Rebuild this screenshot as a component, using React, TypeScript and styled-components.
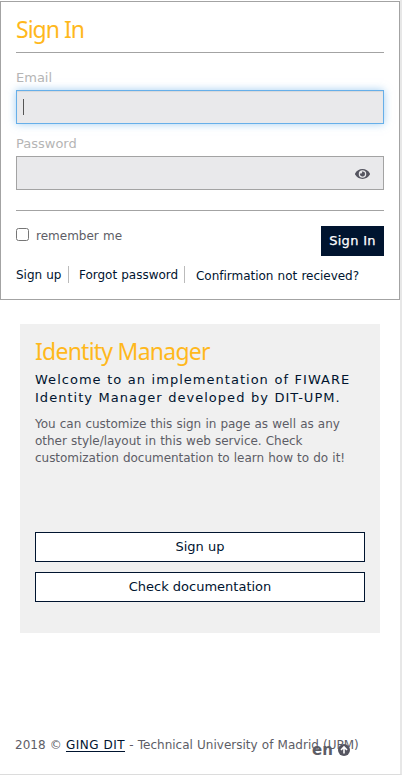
import React from 'react';
import styled, { createGlobalStyle } from 'styled-components';

const GlobalStyle = createGlobalStyle`
  *, *::before, *::after { box-sizing: border-box; }
  body {
    margin: 0;
    background: #fff;
    color: #5d5d66;
    font: 12px/18px Verdana, "DejaVu Sans", sans-serif;
    word-spacing: 0.4px;
    overflow: hidden;
  }
`;

const Page = styled.div`
  display: flex;
  flex-direction: column;
  width: 402px;
  height: 775px;
  padding: 1px 0 0;
  border-right: 2px solid #e7e7e7;
  border-bottom: 1px solid #dcdcdc;
`;

const Card = styled.form`
  display: flex;
  flex-direction: column;
  height: 299px;
  padding: 0 15px;
  border: 1px solid #a3a3a3;
`;

const Title = styled.h1<{ $spacing: number }>`
  margin: 0;
  color: #ffb81c;
  font: 400 23px/30px "Noto Sans", "Open Sans", sans-serif;
  letter-spacing: ${(p) => p.$spacing}px;
  word-spacing: 0;
  white-space: nowrap;
`;

const CardHeader = styled.header`
  height: 51px;
  padding-top: 12px;
  border-bottom: 1px solid #a3a3a3;
`;

const Label = styled.label`
  height: 21px;
  color: #b5b5b5;
  font-size: 13px;
  line-height: 18px;
`;

const EmailLabel = styled(Label)`
  margin-top: 16px;
`;

const PasswordLabel = styled(Label)`
  margin-top: 11px;
`;

const Field = styled.div<{ $focused?: boolean }>`
  display: flex;
  align-items: center;
  height: 34px;
  padding: 0 13px 0 6px;
  background: #e9e9eb;
  border: 1px solid ${(p) => (p.$focused ? '#66afe9' : '#a3a3a3')};
  box-shadow: ${(p) =>
    p.$focused
      ? 'inset 0 1px 1px rgba(0,0,0,.075), 0 0 8px rgba(102,175,233,.6)'
      : 'none'};

  svg { margin-top: 2px; }
`;

const Caret = styled.span`
  width: 1px;
  height: 16px;
  background: #555;
`;

const Input = styled.input`
  flex: 1;
  min-width: 0;
  padding: 0;
  background: transparent;
  border: 0;
  outline: 0;
`;

const Actions = styled.div`
  display: flex;
  justify-content: space-between;
  height: 46px;
  margin-top: 20px;
  padding-top: 15px;
  border-top: 1px solid #a3a3a3;
`;

const Remember = styled.label`
  display: flex;
  gap: 7px;
  height: 18px;
  padding-top: 1px;
`;

const Checkbox = styled.input`
  width: 13px;
  height: 13px;
  margin: 1px 0 0;
`;

const SignInButton = styled.button`
  width: 63px;
  height: 30px;
  padding: 0;
  color: #fff;
  background: #00142f;
  border: 0;
  font: 13px/18px Verdana, "DejaVu Sans", sans-serif;
  letter-spacing: 0.3px;
  -webkit-text-stroke: 0.25px #fff;
`;

const Links = styled.nav`
  display: flex;
  height: 17px;
  margin-top: 10px;
  white-space: nowrap;
`;

const TextLink = styled.a<{ $width?: number; $gap?: number; $drop?: number }>`
  flex: none;
  width: ${(p) => (p.$width ? `${p.$width}px` : 'auto')};
  margin-right: ${(p) => p.$gap || 0}px;
  padding-top: ${(p) => p.$drop || 0}px;
  border-right: ${(p) => (p.$width ? '1px solid #bbb' : '0')};
  color: #00142f;
  letter-spacing: -0.02px;
`;

const InfoPanel = styled.section`
  display: flex;
  flex-direction: column;
  height: 309px;
  margin: 24px 20px 0;
  padding: 12px 15px 0;
  background: #f0f0f0;
`;

const Welcome = styled.p`
  margin: 5px 0 0;
  color: #00142f;
  font-size: 13px;
  line-height: 18px;
  letter-spacing: 1.02px;
  white-space: nowrap;
`;

const Description = styled.p`
  margin: 9px 0 0;
  line-height: 17px;
  letter-spacing: -0.03px;
  white-space: nowrap;
`;

const PanelButtons = styled.div`
  display: grid;
  gap: 10px;
  margin: auto 0 31px;
`;

const OutlineButton = styled.button`
  height: 30px;
  padding: 0;
  color: #00142f;
  background: #fff;
  border: 1px solid #00142f;
  font: 13px/18px Verdana, "DejaVu Sans", sans-serif;
`;

const Footer = styled.footer`
  position: relative;
  height: 38px;
  margin-top: auto;
  padding-left: 15px;
  white-space: nowrap;

  a {
    color: #00142f;
    letter-spacing: 0.45px;
    text-decoration: underline;
    text-underline-offset: 2px;
  }
`;

const Language = styled.div`
  position: absolute;
  top: 5px;
  left: 312px;
  display: flex;
  align-items: center;
  gap: 5px;
  font: 700 15px/18px Verdana, "DejaVu Sans", sans-serif;
`;

const EyeIcon = () => (
  <svg width="15" height="10" viewBox="0 0 576 384" fill="#555560">
    <path
      fillRule="evenodd"
      d="M572 170C518 65 411 0 288 0S58 65 4 170a48 48 0 0 0 0 44c54 105 161 170 284 170s230-65 284-170a48 48 0 0 0 0-44zM288 336a144 144 0 1 1 0-288 144 144 0 0 1 0 288zM288 96a96 96 0 0 0-25 4 48 48 0 0 1-67 67 96 96 0 1 0 92-71z"
    />
  </svg>
);

const UpIcon = () => (
  <svg width="12" height="12" viewBox="0 0 12 12">
    <circle cx="6" cy="6" r="6" fill="#555560" />
    <path d="M6 9.5V3.2M3 6l3-3 3 3" fill="none" stroke="#fff" strokeWidth="1.6" />
  </svg>
);

export default function App() {
  return (
    <>
      <GlobalStyle />
      <Page>
        <Card>
          <CardHeader>
            <Title $spacing={-1}>Sign In</Title>
          </CardHeader>
          <EmailLabel htmlFor="email">Email</EmailLabel>
          <Field $focused>
            <Caret />
            <Input id="email" type="email" />
          </Field>
          <PasswordLabel htmlFor="password">Password</PasswordLabel>
          <Field>
            <Input id="password" type="password" />
            <EyeIcon />
          </Field>
          <Actions>
            <Remember>
              <Checkbox type="checkbox" />
              remember me
            </Remember>
            <SignInButton type="button">Sign In</SignInButton>
          </Actions>
          <Links>
            <TextLink $width={53} $gap={10}>Sign up</TextLink>
            <TextLink $width={106} $gap={11}>Forgot password</TextLink>
            <TextLink $drop={1}>Confirmation not recieved?</TextLink>
          </Links>
        </Card>
        <InfoPanel>
          <Title as="h2" $spacing={-0.76}>Identity Manager</Title>
          <Welcome>
            Welcome to an implementation of FIWARE
            <br />
            Identity Manager developed by DIT-UPM.
          </Welcome>
          <Description>
            You can customize this sign in page as well as any
            <br />
            other style/layout in this web service. Check
            <br />
            customization documentation to learn how to do it!
          </Description>
          <PanelButtons>
            <OutlineButton>Sign up</OutlineButton>
            <OutlineButton>Check documentation</OutlineButton>
          </PanelButtons>
        </InfoPanel>
        <Footer>
          2018 © <a>GING DIT</a> - Technical University of Madrid (UPM)
          <Language>
            en <UpIcon />
          </Language>
        </Footer>
      </Page>
    </>
  );
}
